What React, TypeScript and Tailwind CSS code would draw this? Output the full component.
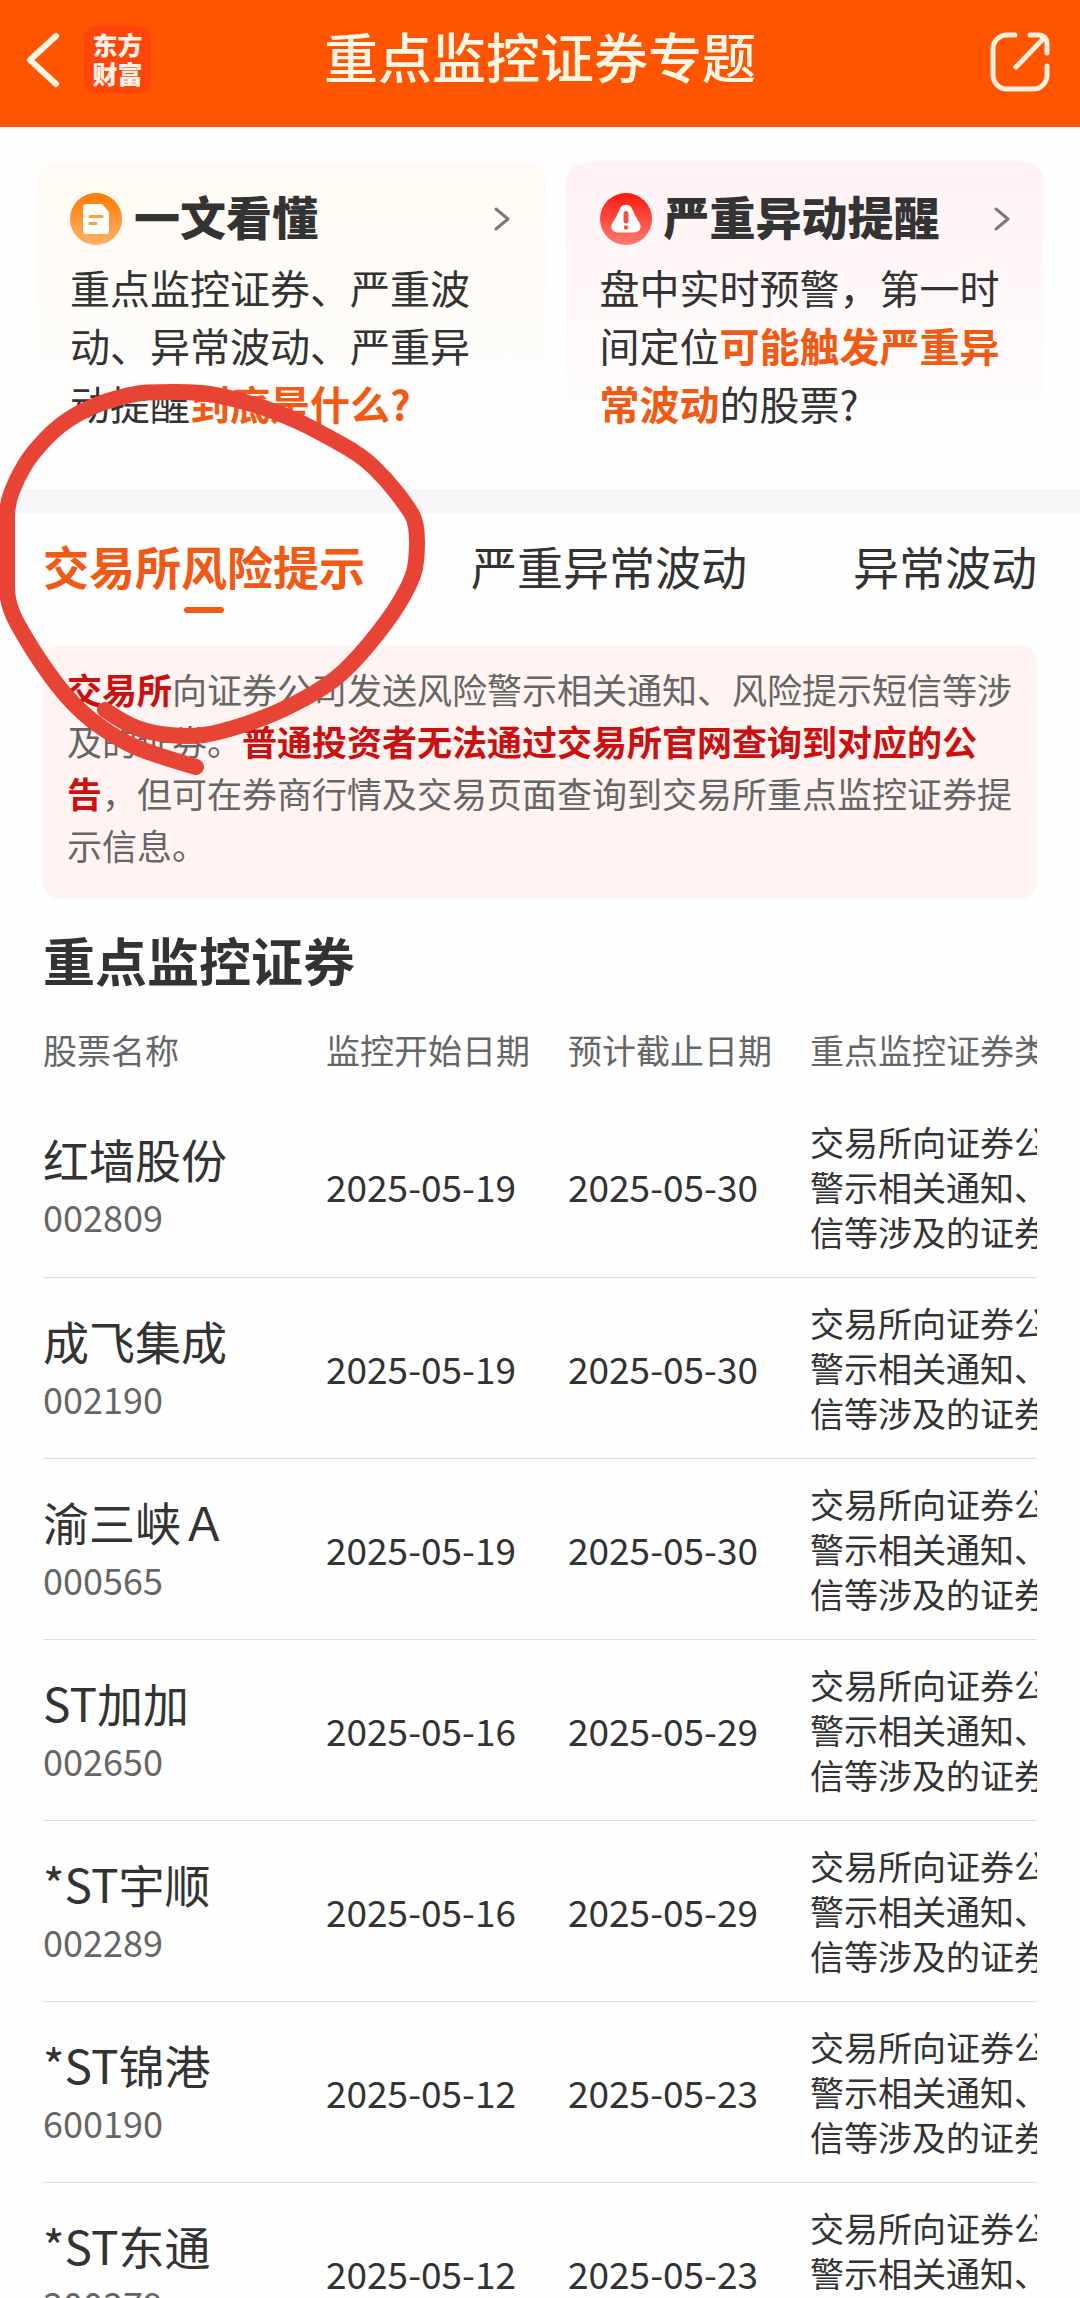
import React from "react";

type Stock = { name: string; code: string; start: string; end: string };

const stocks: Stock[] = [
  { name: "红墙股份", code: "002809", start: "2025-05-19", end: "2025-05-30" },
  { name: "成飞集成", code: "002190", start: "2025-05-19", end: "2025-05-30" },
  { name: "渝三峡Ａ", code: "000565", start: "2025-05-19", end: "2025-05-30" },
  { name: "ST加加", code: "002650", start: "2025-05-16", end: "2025-05-29" },
  { name: "*ST宇顺", code: "002289", start: "2025-05-16", end: "2025-05-29" },
  { name: "*ST锦港", code: "600190", start: "2025-05-12", end: "2025-05-23" },
  { name: "*ST东通", code: "300379", start: "2025-05-12", end: "2025-05-23" },
];

const category = "交易所向证券公司发送风险警示相关通知、风险提示短信等涉及的证券";

function BackIcon() {
  return (
    <svg viewBox="0 0 36 56" className="h-14 w-9" fill="none" stroke="#fff6e6" strokeWidth="6" strokeLinecap="round" strokeLinejoin="round" aria-hidden="true">
      <path d="M32 4 6 28l26 24" />
    </svg>
  );
}

function ShareIcon() {
  return (
    <svg viewBox="0 0 60 60" className="size-[60px]" fill="none" stroke="#ffefdc" strokeWidth="5" strokeLinecap="round" strokeLinejoin="round" aria-hidden="true">
      <path d="M25 3H17A14 14 0 0 0 3 17v26a14 14 0 0 0 14 14h26a14 14 0 0 0 14-14V34" />
      <path d="M40 3h9a8 8 0 0 1 8 8v10" />
      <path d="M54 6 26 35" />
    </svg>
  );
}

function ArticleIcon() {
  return (
    <svg viewBox="0 0 52 52" className="size-[52px] shrink-0" aria-hidden="true">
      <defs>
        <linearGradient id="article" x1="0" y1="0" x2="0" y2="1">
          <stop offset="0" stopColor="#ff7a00" />
          <stop offset="1" stopColor="#ffb26b" />
        </linearGradient>
      </defs>
      <circle cx="26" cy="26" r="26" fill="url(#article)" />
      <path d="M16 11h16l7 8v19a3 3 0 0 1-3 3H16a3 3 0 0 1-3-3V14a3 3 0 0 1 3-3Z" fill="#fffdf8" />
      <path d="M20 23.500h12M20 30.500h6" stroke="#f7a050" strokeWidth="3.200" strokeLinecap="round" />
    </svg>
  );
}

function AlertIcon() {
  return (
    <svg viewBox="0 0 52 52" className="size-[52px] shrink-0" aria-hidden="true">
      <defs>
        <linearGradient id="alert" x1="0" y1="0" x2="0" y2="1">
          <stop offset="0" stopColor="#fb1a0c" />
          <stop offset="1" stopColor="#ff7b72" />
        </linearGradient>
      </defs>
      <circle cx="26" cy="26" r="26" fill="url(#alert)" />
      <path d="M20 15.500c2.500-5 9.500-5 12 0 2 5 4 9 7.500 14.500 3 5-.5 9.500-5.500 9.500H18c-5 0-8.500-4.500-5.500-9.500C16 24.500 18 20.500 20 15.500Z" fill="#fff" />
      <path d="M26 20.500v7.500" stroke="#f0524a" strokeWidth="5" strokeLinecap="round" />
      <circle cx="26" cy="34.500" r="2.200" fill="#f0524a" />
    </svg>
  );
}

function Chevron() {
  return (
    <svg viewBox="0 0 18 26" className="ml-auto h-[26px] w-[18px]" fill="none" stroke="#7a7a7a" strokeWidth="3" strokeLinecap="round" strokeLinejoin="round" aria-hidden="true">
      <path d="M4 3l12 10L4 23" />
    </svg>
  );
}

const strokePoints: [number, number][] = [
  [105, 330], [124, 343], [150, 353], [189, 357], [218, 353], [271, 336], [321, 310], [350, 287],
  [389, 240], [411, 203], [417, 181], [417, 143], [407, 126], [386, 99], [361, 75], [321, 53],
  [296, 40], [257, 25], [214, 14], [189, 12], [160, 12], [136, 13], [96, 24], [61, 43], [32, 73],
  [17, 98], [7, 124], [7, 150], [7, 195], [7, 219], [16, 243], [50, 297], [82, 334], [121, 361], [150, 373], [196, 387],
];

// Joins the midpoints of the samples with quadratic curves, as a drawing pen does.
function penPath(points: [number, number][]) {
  let d = `M${points[0][0]} ${points[0][1]}`;
  for (let i = 1; i < points.length - 1; i++) {
    const [x, y] = points[i];
    const [nx, ny] = points[i + 1];
    d += `Q${x} ${y} ${(x + nx) / 2} ${(y + ny) / 2}`;
  }
  const last = points[points.length - 1];
  return `${d}L${last[0]} ${last[1]}`;
}

function HandDrawnCircle() {
  return (
    <svg viewBox="0 0 440 400" className="pointer-events-none absolute left-0 top-[380px] h-[400px] w-[440px]" fill="none" stroke="#e84436" strokeWidth="16" strokeLinecap="round" strokeLinejoin="round" aria-hidden="true">
      <path d={penPath(strokePoints)} />
    </svg>
  );
}

export default function App() {
  return (
    <div className="relative h-screen overflow-x-hidden overflow-y-auto bg-[#fefefe] font-['Noto_Sans_CJK_SC',sans-serif] text-[#333] [scrollbar-width:none]">
      <header className="grid h-[127px] grid-cols-[1fr_auto_1fr] items-center bg-[#ff5500] pb-2">
        <div className="flex items-center gap-6 pl-6">
          <button type="button" aria-label="返回">
            <BackIcon />
          </button>
          <div className="flex size-[67px] items-center justify-center rounded-xl bg-[#ff460a] pb-0.5 text-center text-[25px] font-black leading-[29px] text-[#fff3ea]">
            东方
            <br />
            财富
          </div>
        </div>
        <h1 className="pb-2 text-[54px] font-medium leading-[60px] text-[#fff6e6]">重点监控证券专题</h1>
        <button type="button" aria-label="分享" className="mr-[30px] justify-self-end pt-1">
          <ShareIcon />
        </button>
      </header>

      <section className="grid grid-cols-[509fr_478fr] gap-5 px-9 pb-[33px] pt-[35px]">
        <a href="#guide" className="block rounded-[20px] bg-linear-to-b from-[#fffaf3] to-[#fefefe] pb-6 pl-[34px] pr-9 pt-[27px]">
          <h2 className="flex h-[60px] items-center gap-3 text-[46px] font-black leading-[54px]">
            <ArticleIcon />
            <span className="pb-2">一文看懂</span>
            <Chevron />
          </h2>
          <p className="mt-[9px] text-[40px] leading-[58px]">
            重点监控证券、严重波动、异常波动、严重异动提醒
            <b className="text-[#f05a14]">到底是什么?</b>
          </p>
        </a>
        <a href="#alert" className="block rounded-[20px] bg-linear-to-b from-[#fff2f4] to-[#fefefe] px-[34px] pb-6 pt-[27px]">
          <h2 className="flex h-[60px] items-center gap-3 text-[46px] font-black leading-[54px]">
            <AlertIcon />
            <span className="pb-2">严重异动提醒</span>
            <Chevron />
          </h2>
          <p className="mt-[9px] text-[40px] leading-[58px]">
            盘中实时预警，第一时间定位<b className="text-[#f05a14]">可能触发严重异常波动</b>的股票?
          </p>
        </a>
      </section>

      <div className="h-6 bg-[#f7f7fa]" />

      <nav className="flex justify-between px-[43px] pt-[22px] text-[46px] leading-[60px]">
        <button type="button" className="flex flex-col items-center font-bold text-[#f05a14]">
          交易所风险提示
          <span className="mt-3 h-1.5 w-10 rounded-full bg-[#f05a14]" />
        </button>
        <button type="button" className="self-start">严重异常波动</button>
        <button type="button" className="self-start">异常波动</button>
      </nav>

      <main className="px-[43px] pt-8">
        <p className="rounded-[18px] bg-[#fff4f1] px-6 pb-7 pt-[18px] text-[35px] leading-[52px] text-[#666]">
          <b className="text-[#cc1010]">交易所</b>向证券公司发送风险警示相关通知、风险提示短信等涉及的证券。
          <b className="text-[#cc1010]">普通投资者无法通过交易所官网查询到对应的公告</b>
          ，但可在券商行情及交易页面查询到交易所重点监控证券提示信息。
        </p>

        <h2 className="mt-7 text-[52px] font-bold leading-[66px]">重点监控证券</h2>

        <div className="overflow-x-auto [scrollbar-width:none]">
          <table className="w-[1194px] table-fixed text-left">
            <thead>
              <tr className="h-[103px] align-top text-[34px] leading-[50px] text-[#666]">
                <th className="w-[283px] pt-8 font-normal">股票名称</th>
                <th className="w-[242px] pt-8 font-normal">监控开始日期</th>
                <th className="w-[242px] pt-8 font-normal">预计截止日期</th>
                <th className="pt-8 font-normal">重点监控证券类型</th>
              </tr>
            </thead>
            <tbody>
              {stocks.map((s) => (
                <tr key={s.code} className="h-[181px] border-b border-[#e0e0e0]">
                  <td>
                    <div className="text-[46px] leading-[60px]">{s.name}</div>
                    <div className="text-[36px] leading-[56px] text-[#666]">{s.code}</div>
                  </td>
                  <td className="text-[37px] leading-[52px]">{s.start}</td>
                  <td className="text-[37px] leading-[52px]">{s.end}</td>
                  <td className="pr-2 text-[34px] leading-[45px]">{category}</td>
                </tr>
              ))}
            </tbody>
          </table>
        </div>
      </main>

      <HandDrawnCircle />
    </div>
  );
}
